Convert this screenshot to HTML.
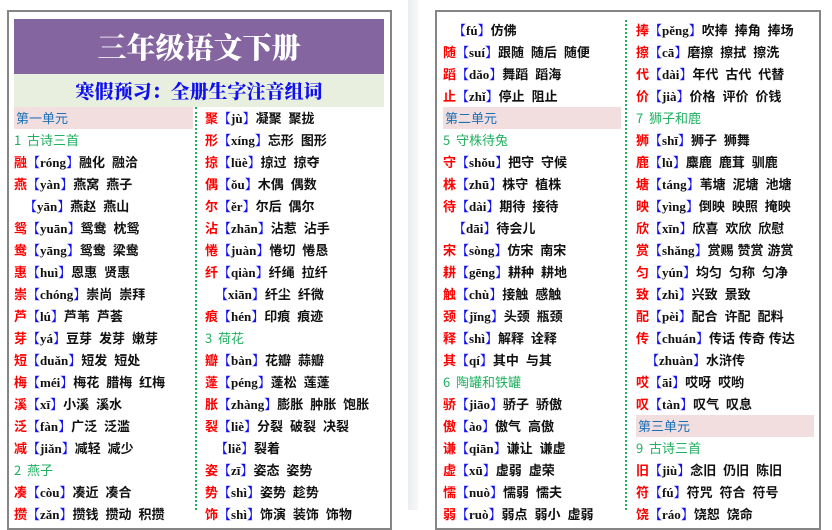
<!DOCTYPE html>
<html><head><meta charset="utf-8"><style>
*{margin:0;padding:0;box-sizing:border-box}
body{width:832px;height:510px;overflow:hidden;background:#fff;position:relative;font-family:"Liberation Serif","Noto Serif CJK SC","Noto Sans CJK SC",serif;font-weight:bold;font-size:13px;color:#111}
.strip{position:absolute;left:408px;top:0;width:10px;height:510px;background:linear-gradient(90deg,#eceef3,#f6f7f9)}
.page{position:absolute;top:10px;height:520px;border:2px solid #858585;background:#fff}
.title{position:absolute;left:14px;top:19px;width:370px;height:55px;background:#8465a0;color:#fff;font-size:29px;text-align:center;line-height:55px;font-family:"Noto Serif CJK SC",serif;font-weight:900}
.sub{position:absolute;left:14px;top:74px;width:370px;height:33px;background:#e9efdf;color:#1010ee;font-size:19px;text-align:center;line-height:33px;font-family:"Noto Serif CJK SC",serif;font-weight:900}
.col{position:absolute}
.r{height:22px;line-height:22px;white-space:nowrap}
.c{color:#f00;font-family:"Noto Sans CJK SC",sans-serif;font-weight:bold}
.b{color:#1010ee}
.w{font-family:"Noto Sans CJK SC",sans-serif;font-weight:bold;word-spacing:4px}
.u{background:#f2dede;color:#1a6fb5;font-family:"Noto Sans CJK SC",sans-serif;font-weight:normal;padding-left:2px}
.l{color:#20b060;font-family:"Noto Sans CJK SC",sans-serif;font-weight:normal}
.ind{padding-left:10px}
.dot{position:absolute;width:0;border-left:2px dotted #20b060}
</style></head><body>
<div class="strip"></div>
<div class="page" style="left:7px;width:385px"></div>
<div class="page" style="left:435px;width:386px"></div>
<div class="title">三年级语文下册</div>
<div class="sub">寒假预习：全册生字注音组词</div>
<div class="dot" style="left:195px;top:107px;height:403px"></div>
<div class="dot" style="left:625px;top:20px;height:490px"></div>

<div class="col" style="left:14px;top:107px;width:179px">
<div class="r u">第一单元</div>
<div class="r l">1&nbsp; 古诗三首</div>
<div class="r"><span class="c">融</span><span class="b">【</span>róng<span class="b">】</span><span class="w">融化 融洽</span></div>
<div class="r"><span class="c">燕</span><span class="b">【</span>yàn<span class="b">】</span><span class="w">燕窝 燕子</span></div>
<div class="r ind"><span class="b">【</span>yān<span class="b">】</span><span class="w">燕赵 燕山</span></div>
<div class="r"><span class="c">鸳</span><span class="b">【</span>yuān<span class="b">】</span><span class="w">鸳鸯 枕鸳</span></div>
<div class="r"><span class="c">鸯</span><span class="b">【</span>yāng<span class="b">】</span><span class="w">鸳鸯 梁鸯</span></div>
<div class="r"><span class="c">惠</span><span class="b">【</span>huì<span class="b">】</span><span class="w">恩惠 贤惠</span></div>
<div class="r"><span class="c">崇</span><span class="b">【</span>chóng<span class="b">】</span><span class="w">崇尚 崇拜</span></div>
<div class="r"><span class="c">芦</span><span class="b">【</span>lú<span class="b">】</span><span class="w">芦苇 芦荟</span></div>
<div class="r"><span class="c">芽</span><span class="b">【</span>yá<span class="b">】</span><span class="w">豆芽 发芽 嫩芽</span></div>
<div class="r"><span class="c">短</span><span class="b">【</span>duǎn<span class="b">】</span><span class="w">短发 短处</span></div>
<div class="r"><span class="c">梅</span><span class="b">【</span>méi<span class="b">】</span><span class="w">梅花 腊梅 红梅</span></div>
<div class="r"><span class="c">溪</span><span class="b">【</span>xī<span class="b">】</span><span class="w">小溪 溪水</span></div>
<div class="r"><span class="c">泛</span><span class="b">【</span>fàn<span class="b">】</span><span class="w">广泛 泛滥</span></div>
<div class="r"><span class="c">减</span><span class="b">【</span>jiǎn<span class="b">】</span><span class="w">减轻 减少</span></div>
<div class="r l">2&nbsp; 燕子</div>
<div class="r"><span class="c">凑</span><span class="b">【</span>còu<span class="b">】</span><span class="w">凑近 凑合</span></div>
<div class="r"><span class="c">攒</span><span class="b">【</span>zǎn<span class="b">】</span><span class="w">攒钱 攒动 积攒</span></div>
</div>

<div class="col" style="left:205px;top:107px;width:180px">
<div class="r"><span class="c">聚</span><span class="b">【</span>jù<span class="b">】</span><span class="w">凝聚 聚拢</span></div>
<div class="r"><span class="c">形</span><span class="b">【</span>xíng<span class="b">】</span><span class="w">忘形 图形</span></div>
<div class="r"><span class="c">掠</span><span class="b">【</span>lüè<span class="b">】</span><span class="w">掠过 掠夺</span></div>
<div class="r"><span class="c">偶</span><span class="b">【</span>ǒu<span class="b">】</span><span class="w">木偶 偶数</span></div>
<div class="r"><span class="c">尔</span><span class="b">【</span>ěr<span class="b">】</span><span class="w">尔后 偶尔</span></div>
<div class="r"><span class="c">沾</span><span class="b">【</span>zhān<span class="b">】</span><span class="w">沾惹 沾手</span></div>
<div class="r"><span class="c">惓</span><span class="b">【</span>juàn<span class="b">】</span><span class="w">惓切 惓恳</span></div>
<div class="r"><span class="c">纤</span><span class="b">【</span>qiàn<span class="b">】</span><span class="w">纤绳 拉纤</span></div>
<div class="r ind"><span class="b">【</span>xiān<span class="b">】</span><span class="w">纤尘 纤微</span></div>
<div class="r"><span class="c">痕</span><span class="b">【</span>hén<span class="b">】</span><span class="w">印痕 痕迹</span></div>
<div class="r l">3&nbsp; 荷花</div>
<div class="r"><span class="c">瓣</span><span class="b">【</span>bàn<span class="b">】</span><span class="w">花瓣 蒜瓣</span></div>
<div class="r"><span class="c">蓬</span><span class="b">【</span>péng<span class="b">】</span><span class="w">蓬松 莲蓬</span></div>
<div class="r"><span class="c">胀</span><span class="b">【</span>zhàng<span class="b">】</span><span class="w">膨胀 肿胀 饱胀</span></div>
<div class="r"><span class="c">裂</span><span class="b">【</span>liè<span class="b">】</span><span class="w">分裂 破裂 决裂</span></div>
<div class="r ind"><span class="b">【</span>liě<span class="b">】</span><span class="w">裂着</span></div>
<div class="r"><span class="c">姿</span><span class="b">【</span>zī<span class="b">】</span><span class="w">姿态 姿势</span></div>
<div class="r"><span class="c">势</span><span class="b">【</span>shì<span class="b">】</span><span class="w">姿势 趁势</span></div>
<div class="r"><span class="c">饰</span><span class="b">【</span>shì<span class="b">】</span><span class="w">饰演 装饰 饰物</span></div>
</div>

<div class="col" style="left:443px;top:19px;width:178px">
<div class="r ind"><span class="b">【</span>fú<span class="b">】</span><span class="w">仿佛</span></div>
<div class="r"><span class="c">随</span><span class="b">【</span>suí<span class="b">】</span><span class="w">跟随 随后 随便</span></div>
<div class="r"><span class="c">蹈</span><span class="b">【</span>dǎo<span class="b">】</span><span class="w">舞蹈 蹈海</span></div>
<div class="r"><span class="c">止</span><span class="b">【</span>zhǐ<span class="b">】</span><span class="w">停止 阻止</span></div>
<div class="r u">第二单元</div>
<div class="r l">5&nbsp; 守株待兔</div>
<div class="r"><span class="c">守</span><span class="b">【</span>shǒu<span class="b">】</span><span class="w">把守 守候</span></div>
<div class="r"><span class="c">株</span><span class="b">【</span>zhū<span class="b">】</span><span class="w">株守 植株</span></div>
<div class="r"><span class="c">待</span><span class="b">【</span>dài<span class="b">】</span><span class="w">期待 接待</span></div>
<div class="r ind"><span class="b">【</span>dāi<span class="b">】</span><span class="w">待会儿</span></div>
<div class="r"><span class="c">宋</span><span class="b">【</span>sòng<span class="b">】</span><span class="w">仿宋 南宋</span></div>
<div class="r"><span class="c">耕</span><span class="b">【</span>gēng<span class="b">】</span><span class="w">耕种 耕地</span></div>
<div class="r"><span class="c">触</span><span class="b">【</span>chù<span class="b">】</span><span class="w">接触 感触</span></div>
<div class="r"><span class="c">颈</span><span class="b">【</span>jǐng<span class="b">】</span><span class="w">头颈 瓶颈</span></div>
<div class="r"><span class="c">释</span><span class="b">【</span>shì<span class="b">】</span><span class="w">解释 诠释</span></div>
<div class="r"><span class="c">其</span><span class="b">【</span>qí<span class="b">】</span><span class="w">其中 与其</span></div>
<div class="r l">6&nbsp; 陶罐和铁罐</div>
<div class="r"><span class="c">骄</span><span class="b">【</span>jiāo<span class="b">】</span><span class="w">骄子 骄傲</span></div>
<div class="r"><span class="c">傲</span><span class="b">【</span>ào<span class="b">】</span><span class="w">傲气 高傲</span></div>
<div class="r"><span class="c">谦</span><span class="b">【</span>qiān<span class="b">】</span><span class="w">谦让 谦虚</span></div>
<div class="r"><span class="c">虚</span><span class="b">【</span>xū<span class="b">】</span><span class="w">虚弱 虚荣</span></div>
<div class="r"><span class="c">懦</span><span class="b">【</span>nuò<span class="b">】</span><span class="w">懦弱 懦夫</span></div>
<div class="r"><span class="c">弱</span><span class="b">【</span>ruò<span class="b">】</span><span class="w">弱点 弱小 虚弱</span></div>
</div>

<div class="col" style="left:636px;top:19px;width:178px">
<div class="r"><span class="c">捧</span><span class="b">【</span>pěng<span class="b">】</span><span class="w">吹捧 捧角 捧场</span></div>
<div class="r"><span class="c">擦</span><span class="b">【</span>cā<span class="b">】</span><span class="w">磨擦 擦拭 擦洗</span></div>
<div class="r"><span class="c">代</span><span class="b">【</span>dài<span class="b">】</span><span class="w">年代 古代 代替</span></div>
<div class="r"><span class="c">价</span><span class="b">【</span>jià<span class="b">】</span><span class="w">价格 评价 价钱</span></div>
<div class="r l">7&nbsp; 狮子和鹿</div>
<div class="r"><span class="c">狮</span><span class="b">【</span>shī<span class="b">】</span><span class="w">狮子 狮舞</span></div>
<div class="r"><span class="c">鹿</span><span class="b">【</span>lù<span class="b">】</span><span class="w">麋鹿 鹿茸 驯鹿</span></div>
<div class="r"><span class="c">塘</span><span class="b">【</span>táng<span class="b">】</span><span class="w">苇塘 泥塘 池塘</span></div>
<div class="r"><span class="c">映</span><span class="b">【</span>yìng<span class="b">】</span><span class="w">倒映 映照 掩映</span></div>
<div class="r"><span class="c">欣</span><span class="b">【</span>xīn<span class="b">】</span><span class="w">欣喜 欢欣 欣慰</span></div>
<div class="r"><span class="c">赏</span><span class="b">【</span>shǎng<span class="b">】</span><span class="w" style="word-spacing:1px">赏赐 赞赏 游赏</span></div>
<div class="r"><span class="c">匀</span><span class="b">【</span>yún<span class="b">】</span><span class="w">均匀 匀称 匀净</span></div>
<div class="r"><span class="c">致</span><span class="b">【</span>zhì<span class="b">】</span><span class="w">兴致 景致</span></div>
<div class="r"><span class="c">配</span><span class="b">【</span>pèi<span class="b">】</span><span class="w">配合 许配 配料</span></div>
<div class="r"><span class="c">传</span><span class="b">【</span>chuán<span class="b">】</span><span class="w" style="word-spacing:1px">传话 传奇 传达</span></div>
<div class="r ind"><span class="b">【</span>zhuàn<span class="b">】</span><span class="w">水浒传</span></div>
<div class="r"><span class="c">哎</span><span class="b">【</span>āi<span class="b">】</span><span class="w">哎呀 哎哟</span></div>
<div class="r"><span class="c">叹</span><span class="b">【</span>tàn<span class="b">】</span><span class="w">叹气 叹息</span></div>
<div class="r u">第三单元</div>
<div class="r l">9&nbsp; 古诗三首</div>
<div class="r"><span class="c">旧</span><span class="b">【</span>jiù<span class="b">】</span><span class="w">念旧 仍旧 陈旧</span></div>
<div class="r"><span class="c">符</span><span class="b">【</span>fú<span class="b">】</span><span class="w">符咒 符合 符号</span></div>
<div class="r"><span class="c">饶</span><span class="b">【</span>ráo<span class="b">】</span><span class="w">饶恕 饶命</span></div>
</div>
</body></html>
